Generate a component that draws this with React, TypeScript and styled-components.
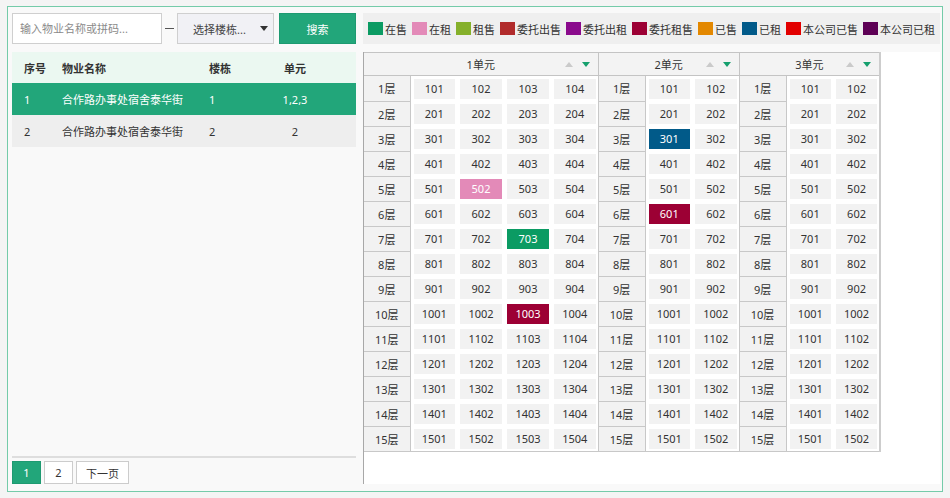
import React from 'react';
import styled, { createGlobalStyle } from 'styled-components';

const GlobalStyle = createGlobalStyle`
  html, body { margin: 0; padding: 0; background: #f4f4f4; }
  body {
    font-family: "Noto Sans", "Noto Sans CJK SC", sans-serif;
    font-size: 11px;
    color: #333;
  }
  * { box-sizing: border-box; }
`;

const Frame = styled.div`
  margin: 6px 0 0 7px;
  width: 936px;
  height: 486px;
  border: 1px solid #74cba9;
  background: #f9f9f9;
  padding: 6px 3px 7px 4px;
  display: flex;
  gap: 7px;
`;

const LeftCol = styled.div`
  width: 345px;
  display: flex;
  flex-direction: column;
`;

const SearchBar = styled.div`
  display: flex;
  align-items: center;
  height: 31px;
  margin-bottom: 8px;
`;

const SearchInput = styled.input`
  width: 150px;
  height: 31px;
  border: 1px solid #cfcfcf;
  background: #fff;
  padding: 0 7px;
  font: inherit;
  color: #333;
  outline: none;
  &::placeholder { color: #8a8a8a; }
`;

const Dash = styled.span`
  width: 15px;
  display: flex;
  justify-content: center;
  &::before {
    content: "";
    width: 9px;
    height: 1px;
    background: #555;
  }
`;

const SelectBox = styled.div`
  width: 97px;
  height: 31px;
  border: 1px solid #cfcfcf;
  background: #f1f1f5;
  display: flex;
  align-items: center;
  justify-content: space-between;
  padding: 0 5px 0 15px;
  color: #444;
`;

const Caret = styled.span<{ $up?: boolean; $color: string }>`
  width: 0;
  height: 0;
  border-left: 4px solid transparent;
  border-right: 4px solid transparent;
  ${p => (p.$up ? `border-bottom: 5px solid ${p.$color};` : `border-top: 5px solid ${p.$color};`)}
`;

const SearchButton = styled.button`
  margin-left: 5px;
  width: 77px;
  height: 31px;
  background: #22a67a;
  color: #fff;
  border: 1px solid #1e9a71;
  font: inherit;
  padding: 0;
`;

const listCols = '50px 147px 60px 52px 1fr';

const ListHeader = styled.div`
  display: grid;
  grid-template-columns: ${listCols};
  height: 31px;
  align-items: center;
  background: #ebf8f1;
  font-weight: bold;
  color: #333;
`;

const ListRow = styled.div<{ $active?: boolean }>`
  display: grid;
  grid-template-columns: ${listCols};
  height: 32px;
  align-items: center;
  background: ${p => (p.$active ? '#22a67a' : '#eeeeee')};
  color: ${p => (p.$active ? '#fff' : '#333')};
`;

const ListCell = styled.span<{ $first?: boolean; $center?: boolean }>`
  padding-left: ${p => (p.$first ? '12px' : '0')};
  text-align: ${p => (p.$center ? 'center' : 'left')};
  white-space: nowrap;
`;

const Spacer = styled.div`
  flex: 1;
`;

const Divider = styled.div`
  height: 2px;
  background: #dedede;
  margin-bottom: 3px;
`;

const Pager = styled.div`
  display: flex;
  gap: 3px;
  height: 23px;
`;

const PageButton = styled.button<{ $active?: boolean }>`
  min-width: 29px;
  height: 23px;
  padding: 0 9px;
  border: 1px solid ${p => (p.$active ? '#1e9a71' : '#cccccc')};
  background: ${p => (p.$active ? '#22a67a' : '#ffffff')};
  color: ${p => (p.$active ? '#fff' : '#333')};
  font: inherit;
`;

const RightCol = styled.div`
  flex: 1;
  display: flex;
  flex-direction: column;
`;

const Legend = styled.div`
  height: 31px;
  background: #efefef;
  display: flex;
  align-items: center;
  padding-left: 5px;
  margin-bottom: 8px;
`;

const LegendItem = styled.div`
  display: flex;
  align-items: center;
  margin-right: 5px;
  white-space: nowrap;
`;

const Swatch = styled.span<{ $color: string }>`
  width: 15px;
  height: 13px;
  margin-right: 2px;
  background: ${p => p.$color};
`;

const Panel = styled.div`
  flex: 1;
  background: #fff;
  border-left: 1px solid #a8a8a8;
`;

const Table = styled.table`
  border-collapse: collapse;
  table-layout: fixed;
  width: 516px;
  border-right: 2px solid #cdcdcd;
  border-bottom: 1px solid #c8c8c8;
`;

const Col = styled.col<{ $w: number }>`
  width: ${p => p.$w}px;
`;

const HeadCell = styled.th<{ $first?: boolean }>`
  height: 23px;
  padding: 0;
  border: 1px solid #c4c4c4;
  ${p => (p.$first ? 'border-left: 0;' : '')}
  background: #f3f3f3;
  font-weight: normal;
`;

const HeadInner = styled.div`
  display: grid;
  grid-template-columns: 1fr auto 1fr;
  align-items: center;
`;

const Arrows = styled.div`
  justify-self: end;
  display: flex;
  align-items: center;
  gap: 9px;
  padding-right: 8px;
`;

const FloorCell = styled.td<{ $first?: boolean }>`
  height: 25px;
  padding: 0;
  border: 1px solid #c8c8c8;
  ${p => (p.$first ? 'border-left: 0;' : '')}
  background: #f2f2f2;
  text-align: center;
  white-space: nowrap;
`;

const RoomCell = styled.td`
  height: 25px;
  padding: 3px 2px 2px 3px;
`;

const RoomBox = styled.div<{ $color?: string }>`
  height: 20px;
  line-height: 20px;
  text-align: center;
  background: ${p => p.$color || '#f2f2f2'};
  color: ${p => (p.$color ? '#fff' : '#333')};
`;

const legend: [string, string][] = [
  ['在售', '#0b9b63'],
  ['在租', '#e38ab8'],
  ['租售', '#85b02b'],
  ['委托出售', '#b12b2b'],
  ['委托出租', '#8a0a8c'],
  ['委托租售', '#9c0034'],
  ['已售', '#e38800'],
  ['已租', '#015a89'],
  ['本公司已售', '#e20000'],
  ['本公司已租', '#5d0055'],
];

const units = [
  { name: '1单元', rooms: 4, marks: { 502: '#e38ab8', 703: '#0b9b63', 1003: '#9c0034' } as Record<number, string> },
  { name: '2单元', rooms: 2, marks: { 301: '#015a89', 601: '#9c0034' } as Record<number, string> },
  { name: '3单元', rooms: 2, marks: {} as Record<number, string> },
];

const floors = Array.from({ length: 15 }, (_, i) => i + 1);

export default function App() {
  return (
    <>
      <GlobalStyle />
      <Frame>
        <LeftCol>
          <SearchBar>
            <SearchInput placeholder="输入物业名称或拼码..." />
            <Dash />
            <SelectBox>
              <span>选择楼栋...</span>
              <Caret $color="#333" />
            </SelectBox>
            <SearchButton>搜索</SearchButton>
          </SearchBar>
          <ListHeader>
            <ListCell $first>序号</ListCell>
            <ListCell>物业名称</ListCell>
            <ListCell>楼栋</ListCell>
            <ListCell $center>单元</ListCell>
          </ListHeader>
          <ListRow $active>
            <ListCell $first>1</ListCell>
            <ListCell>合作路办事处宿舍泰华街</ListCell>
            <ListCell>1</ListCell>
            <ListCell $center>1,2,3</ListCell>
          </ListRow>
          <ListRow>
            <ListCell $first>2</ListCell>
            <ListCell>合作路办事处宿舍泰华街</ListCell>
            <ListCell>2</ListCell>
            <ListCell $center>2</ListCell>
          </ListRow>
          <Spacer />
          <Divider />
          <Pager>
            <PageButton $active>1</PageButton>
            <PageButton>2</PageButton>
            <PageButton>下一页</PageButton>
          </Pager>
        </LeftCol>
        <RightCol>
          <Legend>
            {legend.map(([label, color]) => (
              <LegendItem key={label}>
                <Swatch $color={color} />
                {label}
              </LegendItem>
            ))}
          </Legend>
          <Panel>
            <Table>
              <colgroup>
                {units.map((u, ui) => (
                  <React.Fragment key={u.name}>
                    <Col $w={ui === 0 ? 46 : 47} />
                    {Array.from({ length: u.rooms }, (_, r) => (
                      <Col key={r} $w={47} />
                    ))}
                  </React.Fragment>
                ))}
              </colgroup>
              <thead>
                <tr>
                  {units.map((u, ui) => (
                    <HeadCell key={u.name} colSpan={u.rooms + 1} $first={ui === 0}>
                      <HeadInner>
                        <span />
                        <span>{u.name}</span>
                        <Arrows>
                          <Caret $up $color="#cacaca" />
                          <Caret $color="#16a06e" />
                        </Arrows>
                      </HeadInner>
                    </HeadCell>
                  ))}
                </tr>
              </thead>
              <tbody>
                {floors.map(f => (
                  <tr key={f}>
                    {units.map((u, ui) => (
                      <React.Fragment key={u.name}>
                        <FloorCell $first={ui === 0}>{f}层</FloorCell>
                        {Array.from({ length: u.rooms }, (_, r) => {
                          const num = f * 100 + r + 1;
                          return (
                            <RoomCell key={r}>
                              <RoomBox $color={u.marks[num]}>{num}</RoomBox>
                            </RoomCell>
                          );
                        })}
                      </React.Fragment>
                    ))}
                  </tr>
                ))}
              </tbody>
            </Table>
          </Panel>
        </RightCol>
      </Frame>
    </>
  );
}
